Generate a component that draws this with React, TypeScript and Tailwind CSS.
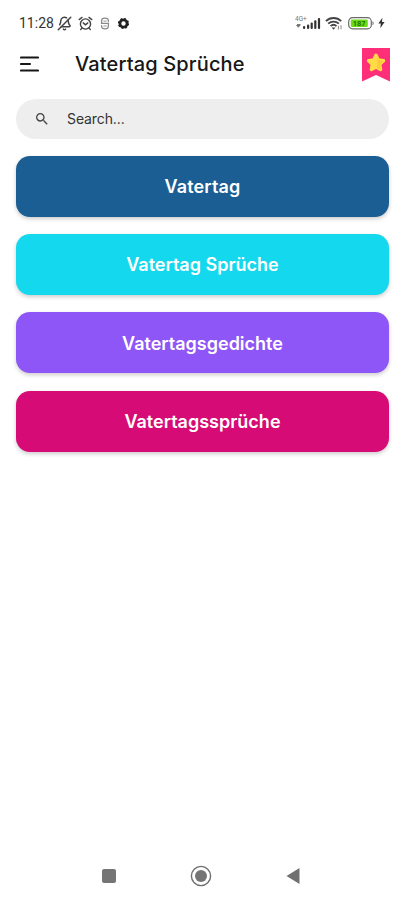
import { BellOff } from "lucide-react"
import { MdSearch } from "react-icons/md"

type Category = {
    title: string
    color: string
    spacing: string
}

const categories: Category[] = [
    { title: "Vatertag", color: "bg-[#1b5e94]", spacing: "tracking-[0.15px]" },
    { title: "Vatertag Sprüche", color: "bg-[#14d8ed]", spacing: "tracking-normal" },
    { title: "Vatertagsgedichte", color: "bg-[#8f56f7]", spacing: "tracking-normal" },
    { title: "Vatertagssprüche", color: "bg-[#d60b76]", spacing: "tracking-normal" },
]

const AlarmIcon = () => (
    <svg width="15" height="15" viewBox="0 0 15 15" fill="none" stroke="#444" strokeWidth="1.4" strokeLinecap="round">
        <circle cx="7.5" cy="8" r="5.1" />
        <path d="M1.2 3.6 4 1.4M13.8 3.6 11 1.4M3.8 12.3 2.6 13.6M11.2 12.3l1.2 1.3" />
        <path d="m5.2 6.9 2.3 2 2.3-2" />
    </svg>
)

const SyncIcon = () => (
    <svg width="10" height="13" viewBox="0 0 10 13" fill="none" stroke="#8a8a8a" strokeWidth="1.3" strokeLinecap="round">
        <path d="M8.4 4.6V4C8.4 2.2 7 1.2 5 1.2S1.6 2.2 1.6 4v2.4h6.8V9c0 1.8-1.4 2.9-3.4 2.9S1.6 10.8 1.6 9v-.4" />
        <path d="M3.8 4.1h2.4M3.8 9h2.4" strokeWidth="0.9" />
    </svg>
)

const GearIcon = () => (
    <svg width="13" height="13" viewBox="0 0 13 13" fill="none" stroke="#222">
        <circle cx="6.5" cy="6.5" r="3.6" strokeWidth="2.8" />
        <circle cx="6.5" cy="6.5" r="5" strokeWidth="1.2" strokeDasharray="1.963 1.964" />
    </svg>
)

const SignalIcon = () => (
    <svg width="27" height="16" viewBox="0 0 27 16" fill="#333">
        <text x="0" y="6" fontSize="6.5" fill="#777" className="font-['Roboto',sans-serif]">4G+</text>
        <path d="M.8 10h5L3.3 12.8zM2 9h3.5v1H2z" fill="#777" />
        <rect x="8" y="11" width="2.2" height="3" rx="1" />
        <rect x="12" y="9.5" width="2.2" height="4.5" rx="1" />
        <rect x="15.6" y="7.5" width="2.2" height="6.5" rx="1" />
        <rect x="19.2" y="5.2" width="2.2" height="8.8" rx="1" />
        <rect x="22.9" y="3" width="2.2" height="11" rx="1" />
    </svg>
)

const WifiIcon = () => (
    <svg width="18" height="15" viewBox="0 0 18 15" fill="none" stroke="#444" strokeWidth="1.8">
        <path d="M.9 5.2c4.3-4.3 11-4.3 15.3 0" />
        <path d="M3.2 7.7c3.1-2.9 7.6-2.9 10.7 0" />
        <path d="M5.6 10.2c1.7-1.6 4.2-1.6 5.9 0" />
        <path d="M8.5 13.8 6.6 11.5h3.9z" fill="#444" stroke="none" />
        <path d="M13.4 13.5V9.8M16 9.2v4" stroke="#888" strokeWidth="1" />
    </svg>
)

const BatteryIcon = () => (
    <svg width="27" height="13" viewBox="0 0 27 13">
        <rect x=".7" y=".7" width="22.6" height="11.1" rx="3.8" fill="#fff" stroke="#6b6b6b" strokeWidth="1.2" />
        <rect x="2.8" y="2.5" width="17" height="7.5" rx="1.3" fill="#6bdb18" />
        <text x="11.2" y="8.9" fontSize="7.5" fontWeight="700" textAnchor="middle" fill="#237306" className="font-['Roboto',sans-serif]">187</text>
        <path d="M24.5 4.3c1.5.5 1.5 3.5 0 4z" fill="#666" />
    </svg>
)

const StatusBar = () => (
    <div className="flex h-[46px] items-center px-[19px]">
        <span className="w-9 whitespace-nowrap font-['Roboto',sans-serif] text-[14px] leading-none text-[#333]">11:28</span>
        <BellOff size={15} strokeWidth={2.4} className="ml-0.5 -scale-x-100 text-[#444]" />
        <div className="ml-1.5"><AlarmIcon /></div>
        <div className="ml-[7px]"><SyncIcon /></div>
        <div className="ml-[7px]"><GearIcon /></div>
        <div className="ml-auto flex items-center">
            <SignalIcon />
            <div className="ml-[3px]"><WifiIcon /></div>
            <div className="ml-[5px]"><BatteryIcon /></div>
            <svg width="7" height="12" viewBox="0 0 7 12" className="ml-[3px]">
                <path d="M4.4.8.3 6.6h2.5l-.5 4.7 4.3-6.2H4z" fill="#333" />
            </svg>
        </div>
    </div>
)

const Header = () => (
    <header className="flex h-9 items-center pl-5 pr-3.5">
        <svg width="19" height="16" viewBox="0 0 19 16" stroke="#171717" strokeWidth="2.1" strokeLinecap="round">
            <path d="M1 1.5h17M1 8h9M1 14.5h17" />
        </svg>
        <h1 className="ml-9 whitespace-nowrap text-[20px] font-medium leading-none tracking-[0.15px] text-[#171717]">
            Vatertag Sprüche
        </h1>
        <svg width="28" height="34" viewBox="0 0 28 34" className="ml-auto mt-0.5">
            <path d="M0 0h28v33.5L14 27 0 33.5z" fill="#ff2e78" />
            <path d="m14 7.2 2.3 4.7 5.2.8-3.8 3.6.9 5.2-4.6-2.5-4.6 2.5.9-5.2-3.8-3.6 5.2-.8z" fill="#ffdc45" stroke="#ffdc45" strokeWidth="3.4" strokeLinejoin="round" />
            <path d="M15.5 8 17 12l5 1-4 3.8 1 5.2-4-2z" fill="#fccb3c" />
        </svg>
    </header>
)

const NavigationBar = () => (
    <nav className="flex h-12 items-center pl-[102px] pr-[104px]">
        <div className="size-[14px] rounded-[2px] bg-[#757575]" />
        <svg width="22" height="22" viewBox="0 0 22 22" className="ml-[74px]">
            <circle cx="11" cy="11" r="9.6" fill="none" stroke="#6f6f6f" strokeWidth="1.4" />
            <circle cx="11" cy="11" r="6" fill="#757575" />
        </svg>
        <svg width="14" height="18" viewBox="0 0 14 18" className="ml-auto">
            <path d="M.5 9 13.5 1v16z" fill="#707070" />
        </svg>
    </nav>
)

export default function App() {
    return (
        <div className="flex h-[900px] w-[404px] flex-col overflow-hidden bg-white font-['Inter',sans-serif]">
            <StatusBar />
            <Header />
            <main className="flex flex-1 flex-col px-4 pr-[15px] pt-[17px]">
                <div className="flex h-10 shrink-0 items-center rounded-full bg-[#eeeeee] pl-[18px]">
                    <MdSearch size={16} color="#444" />
                    <span className="ml-[17px] text-[14px] leading-none tracking-[-0.1px] text-[#333]">Search...</span>
                </div>
                <div className="mt-[16.5px] flex flex-col gap-[17.4px]">
                    {categories.map((category) => (
                        <button
                            key={category.title}
                            className={`flex h-[61px] items-center justify-center rounded-[14px] pt-0.5 text-[18px] font-semibold leading-none text-white shadow-[0_2px_4px_rgba(0,0,0,0.2)] ${category.color} ${category.spacing}`}
                        >
                            {category.title}
                        </button>
                    ))}
                </div>
            </main>
            <NavigationBar />
        </div>
    )
}
